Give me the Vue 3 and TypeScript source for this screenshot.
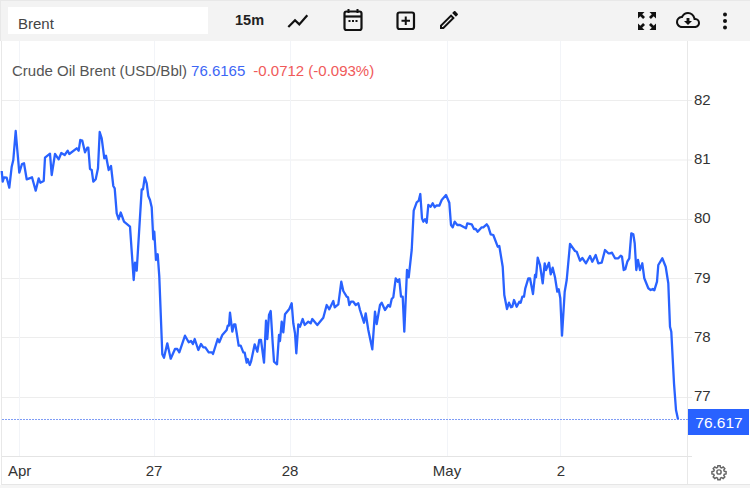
<script setup lang="ts">
const W = 750
const H = 444
const top = 41

const raw: [number, number][] = [
[1.7,171],[2.7,181.7],[4,177.3],[6.7,177.7],[9.3,187.7],[11.7,166.7],[13.3,160],[15.7,131],[17.3,150],[19.3,172.7],[22,164],[24,163.3],[26.7,179.3],[32,177.3],[35.7,190.7],[38.7,178.3],[40.3,182.7],[43.7,181],[45,157.7],[50,153.7],[51.7,175],[55,154],[58.7,159.3],[61.3,153],[64.7,155],[67.7,150.7],[69.3,154],[76.7,148.3],[78.7,150.7],[80.3,140],[82.3,140.7],[85,152.3],[87.3,147.7],[88.3,147.7],[90,169],[91.7,170],[93.3,181.7],[95.7,179.3],[98,168.3],[99.7,132],[101.7,138.3],[104.3,158.3],[106,155.7],[108.7,170],[111,166],[113.3,186],[114.7,188.3],[116.7,213.3],[118.7,219.3],[120.7,212.5],[124,221.7],[130,226.7],[133.7,280],[135,262.7],[136.7,270.7],[141.7,189.3],[143,189.3],[144.7,177.3],[146.7,183.3],[148.3,196],[150,200],[151.7,207.3],[153.3,239.3],[154.3,231.7],[156,260],[157.7,254.3],[159.3,276.7],[162.3,354.3],[164,357.7],[167.3,343.3],[170.7,358.7],[175,349],[177.3,349],[179.3,352.3],[185,335.7],[188.7,342.3],[191,341],[193,344],[194.7,339],[198.3,350],[201,344],[203.3,347.3],[205.3,347.3],[208.7,352.3],[212,352.3],[213,354],[217.7,339],[219.3,342.3],[222.3,335],[226.7,330],[227.7,325.7],[229,325.7],[230,312.7],[232.3,331.7],[234,324.3],[235.3,324.3],[238.7,345.7],[240.7,345.7],[243.3,352.3],[244.7,352.7],[246.7,362.7],[247.7,359],[249.7,365],[251,361.7],[254.7,344.3],[257.3,351.7],[259.3,340],[261,340],[264,362.7],[266,320.7],[267.3,339],[269,315],[270.7,311],[272.7,343.3],[274,361.7],[277,364.3],[279,335],[280,341],[281.7,321.7],[283.3,332.3],[285,314.3],[289.3,309],[291.7,303.3],[293.3,323.3],[295,333.3],[296.3,353.3],[298.3,324.3],[300,326.7],[302.7,319],[304.7,325],[308.3,321.7],[310.7,323.3],[312.3,319],[317.3,325],[323.3,317.7],[326.7,305],[329.3,309.3],[333.3,301],[334.7,307.3],[338.3,304.3],[341.3,281.7],[343.3,291],[346.7,296.7],[348,297.3],[349.3,305],[351,301.7],[353.3,301.7],[355.7,305],[358.3,303.3],[360,310],[364,322.7],[365.7,313.3],[368.3,330],[372.3,349.3],[375,311.7],[376.7,324],[380,305],[381.7,302.7],[385,310],[388.3,305],[390,306.7],[391.7,299],[393.3,297.3],[395.7,278.3],[397.7,281.7],[399.3,279.3],[401,296.7],[402.7,296.7],[404.3,331.7],[407,270],[408.7,277.3],[411.7,250],[413.7,210.7],[416.7,202.3],[418.7,200.7],[420.3,194],[422,218.3],[423.3,221.7],[425,219.3],[426.7,222.7],[428.3,205],[430.7,206.7],[432.7,203.3],[434.7,207.3],[436.7,205.3],[439.3,205.7],[441.7,200],[446,195],[449.3,202.7],[451,225],[452.7,227.3],[454.7,221.7],[457.3,225],[460,225],[466,228.3],[467.3,223.3],[471.7,224.3],[474,229],[475.7,229],[477.7,231.7],[481.7,227.3],[483.3,227.3],[486.7,224.3],[488.3,226.7],[490.7,234.3],[493.3,235],[497.7,246.7],[499.3,246],[502.7,266.7],[504.3,295],[507,309],[509,302.7],[511,307.3],[512.3,306.7],[514,300],[516.7,306.7],[519.3,301.7],[520.7,302.7],[522.3,296.7],[524,296.7],[525.3,288.3],[528.3,278.3],[530,278.3],[533,294],[535,275],[536,277.3],[537.7,257.7],[540,265],[542.7,283.3],[544.7,263.3],[546,270],[549,262.7],[550.7,274.3],[552.7,267.7],[555,277.3],[557.3,291.7],[558.7,289.3],[560.3,298.3],[562,335.7],[564.7,291.7],[566.7,280],[570,244],[575,251],[576.7,251.7],[580,260.7],[582.3,258],[586,263.3],[590,256],[592.3,261.7],[595.7,255],[598.3,263.3],[601.7,262.7],[605,250],[608.3,253.3],[610,253.3],[612,252.7],[615,258.3],[618.3,258.3],[620.7,255.7],[622,256.7],[623.7,270],[625.3,269.3],[627.3,261.7],[629.3,258.3],[631.3,233.3],[633.3,234.3],[634.7,243.3],[636.3,270],[638,260],[640,270],[642.3,263.3],[644.3,278.3],[648.3,288.3],[650.7,290],[652.7,289],[654.3,290.3],[657,281.7],[658.3,265],[662.3,258.3],[665.7,266.7],[668.3,283.3],[670,326.7],[671.3,331.7],[674,383.3],[676,410],[678,419.3]
]

const linePoints = raw.map(([x, y]) => `${x},${y - top}`).join(' ')

const hGrid = [100.5, 160, 219.5, 278.5, 337.5, 397.5].map((y) => y - top)
const vGrid = [19.5, 154.5, 290.5, 447.5, 560.5]
const yLabels = [
  { t: '82', y: 105 },
  { t: '81', y: 164 },
  { t: '80', y: 223 },
  { t: '79', y: 283 },
  { t: '78', y: 342 },
  { t: '77', y: 401 }
].map((l) => ({ t: l.t, y: l.y - top }))
const xLabels = [
  { t: 'Apr', x: 8, a: 'start' },
  { t: '27', x: 154, a: 'middle' },
  { t: '28', x: 290, a: 'middle' },
  { t: 'May', x: 447, a: 'middle' },
  { t: '2', x: 561, a: 'middle' }
]
</script>

<template>
  <div class="frame">
    <header class="toolbar">
      <div class="search">Brent</div>
      <div class="period">15m</div>
      <button class="tool line-tool" aria-label="Chart type">
        <svg width="24" height="24" viewBox="0 0 24 24"><path d="M1.3 19 8 12.2 12.3 16.4 20.3 7.2" fill="none" stroke="#111" stroke-width="2.2" /></svg>
      </button>
      <button class="tool cal-tool" aria-label="Date range">
        <svg width="24" height="24" viewBox="0 0 24 24"><path d="M7.5 1v4M16.5 1v4" stroke="#111" stroke-width="2" fill="none"/><rect x="3.5" y="3.5" width="17" height="18.5" rx="2" fill="none" stroke="#111" stroke-width="2.2"/><path d="M3.5 8.5h17" stroke="#111" stroke-width="2.2"/><path d="M7.5 12h2v2h-2zM11 12h2v2h-2zM14.5 12h2v2h-2z" fill="#111"/></svg>
      </button>
      <button class="tool plus-tool" aria-label="Compare">
        <svg width="24" height="24" viewBox="0 0 24 24"><rect x="3.5" y="3.5" width="16.5" height="16.5" rx="2" fill="none" stroke="#111" stroke-width="2.2"/><path d="M11.75 7.5v8.5M7.5 11.75h8.5" stroke="#111" stroke-width="2"/></svg>
      </button>
      <button class="tool pen-tool" aria-label="Draw">
        <svg width="24" height="24" viewBox="0 0 24 24"><path fill="#111" d="M14.06 9.02l.92.92L5.92 19H5v-.92l9.06-9.06M17.66 3c-.25 0-.51.1-.7.29l-1.83 1.83 3.75 3.75 1.83-1.83c.39-.39.39-1.02 0-1.41l-2.34-2.34c-.2-.2-.45-.29-.71-.29zm-3.6 3.19L3 17.25V21h3.75L17.81 9.94l-3.75-3.75z"/></svg>
      </button>
      <div class="spacer"></div>
      <button class="tool full-tool" aria-label="Fullscreen">
        <svg width="24" height="24" viewBox="0 0 24 24" fill="#111"><path d="M3 3h6.5L7.2 5.3 10 8.1 8.1 10 5.3 7.2 3 9.5zM21 3v6.5l-2.3-2.3-2.8 2.8L14 8.1l2.8-2.8L14.5 3zM3 21v-6.5l2.3 2.3 2.8-2.8L10 15.9l-2.8 2.8L9.5 21zM21 21h-6.5l2.3-2.3-2.8-2.8 1.9-1.9 2.8 2.8 2.3-2.3z"/></svg>
      </button>
      <button class="tool cloud-tool" aria-label="Download">
        <svg width="24" height="24" viewBox="0 0 24 24"><path fill="#111" d="M19.35 10.04A7.49 7.49 0 0 0 12 4C9.11 4 6.6 5.64 5.35 8.04A5.994 5.994 0 0 0 0 14c0 3.31 2.69 6 6 6h13c2.76 0 5-2.24 5-5 0-2.64-2.05-4.78-4.65-4.96zM19 18H6c-2.21 0-4-1.79-4-4 0-2.05 1.53-3.76 3.56-3.97l1.07-.11.5-.95A5.469 5.469 0 0 1 12 6c2.62 0 4.88 1.86 5.39 4.43l.3 1.5 1.53.11A2.98 2.98 0 0 1 22 15c0 1.65-1.35 3-3 3zm-5.55-8h-2.9v3H8l4 4 4-4h-2.55z"/></svg>
      </button>
      <button class="tool dots-tool" aria-label="More">
        <svg width="24" height="24" viewBox="0 0 24 24" fill="#111"><circle cx="12" cy="5.5" r="2"/><circle cx="12" cy="12" r="2"/><circle cx="12" cy="18.5" r="2"/></svg>
      </button>
    </header>

    <div class="chart">
      <svg class="plot" :width="W" :height="H" :viewBox="`0 0 ${W} ${H}`">
        <line v-for="y in hGrid" :key="y" x1="2" x2="692" :y1="y" :y2="y" stroke="#ededed" />
        <line v-for="x in vGrid" :key="x" :x1="x" :x2="x" y1="0" y2="415" stroke="#f2f4f8" />
        <line x1="1.5" x2="1.5" y1="0" y2="444" stroke="#e8e8e8" />
        <line x1="687.5" x2="687.5" y1="0" y2="444" stroke="#e8e8e8" />
        <line x1="2" x2="692" y1="415.5" y2="415.5" stroke="#e4e4e4" />
        <line x1="2" x2="750" y1="443.5" y2="443.5" stroke="#e6e6e6" />
        <line x1="2" x2="688" y1="378.5" y2="378.5" stroke="#7f9df5" stroke-dasharray="2 1" />
        <polyline :points="linePoints" fill="none" stroke="#2962ff" stroke-width="2.3" stroke-linejoin="round" />
        <text v-for="l in yLabels" :key="l.t" x="694" :y="l.y" class="axis">{{ l.t }}</text>
        <text v-for="l in xLabels" :key="l.t" :x="l.x" y="435" class="axis" :text-anchor="l.a">{{ l.t }}</text>
        <rect x="688" y="368" width="61" height="26" fill="#2962ff" />
        <text x="719" y="386.5" class="tag" text-anchor="middle">76.617</text>
        <g transform="translate(711 423) scale(0.667)" fill="none" stroke="#666" stroke-width="2.2">
          <circle cx="12" cy="12" r="3.2" />
          <path d="M10.3 2.5h3.4l.5 2.6 1.9.8 2.2-1.5 2.4 2.4-1.5 2.2.8 1.9 2.6.5v3.4l-2.6.5-.8 1.9 1.5 2.2-2.4 2.4-2.2-1.5-1.9.8-.5 2.6h-3.4l-.5-2.6-1.9-.8-2.2 1.5-2.4-2.4 1.5-2.2-.8-1.9-2.6-.5v-3.4l2.6-.5.8-1.9-1.5-2.2 2.4-2.4 2.2 1.5 1.9-.8z" />
        </g>
      </svg>
      <div class="legend">
        <span class="name">Crude Oil Brent (USD/Bbl)</span>
        <span class="last">76.6165</span>
        <span class="chg">-0.0712 (-0.093%)</span>
      </div>
    </div>
  </div>
</template>

<style>
html, body { margin: 0; background: #fff; }
</style>

<style scoped>
.frame {
  width: 750px;
  height: 488px;
  box-sizing: border-box;
  overflow: hidden;
  background: #f5f5f5;
  font-family: "Liberation Sans", Arial, sans-serif;
  border-top: 1px solid #e8e8e8;
}
.toolbar {
  height: 40px;
  box-sizing: border-box;
  display: flex;
  align-items: center;
  background: #f3f3f3;
  border-left: 1px solid #e8e8e8;
  padding-left: 7px;
}
.search {
  align-self: flex-start;
  margin-top: 6px;
  width: 200px;
  height: 27px;
  box-sizing: border-box;
  background: #fff;
  color: #444;
  font-size: 15px;
  line-height: 30px;
  padding: 2px 0 0 10px;
}
.period {
  margin-left: 27px;
  margin-bottom: 2px;
  width: 30px;
  font-size: 14.5px;
  font-weight: 700;
  color: #222;
  text-align: left;
}
.tool {
  width: 24px;
  height: 24px;
  padding: 0;
  border: 0;
  background: none;
  display: block;
}
.tool svg { display: block; }
.line-tool { margin-left: 22px; margin-bottom: 2px; }
.cal-tool { margin-left: 30px; margin-bottom: 2px; }
.plus-tool { margin-left: 29px; }
.pen-tool { margin-left: 19px; margin-bottom: 2px; }
.spacer { flex: 1; }
.cloud-tool { margin-left: 17px; margin-bottom: 2px; }
.dots-tool { margin-left: 13px; margin-right: 13px; }
.chart {
  position: relative;
  height: 447px;
}
.plot {
  display: block;
  background: #fff;
}
.axis {
  font-size: 15px;
  fill: #333;
}
.tag {
  font-size: 15.5px;
  fill: #fff;
}
.legend {
  position: absolute;
  left: 12px;
  top: 21px;
  display: flex;
  font-size: 15px;
  line-height: 18px;
}
.name { color: #555; }
.last { color: #3d66f5; margin-left: 4px; }
.chg { color: #f05a5a; margin-left: 8px; }
</style>
